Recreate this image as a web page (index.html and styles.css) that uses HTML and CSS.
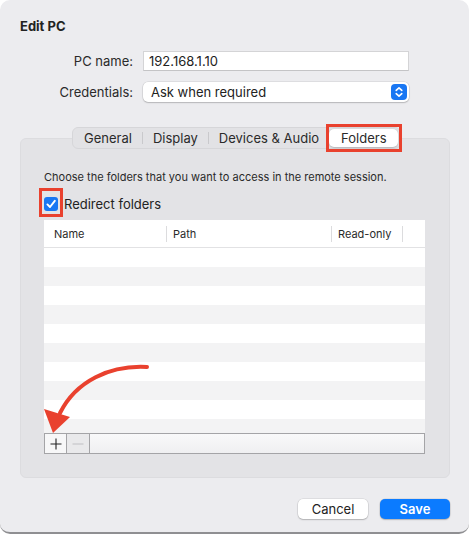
FILE: index.html
```html
<!DOCTYPE html>
<html lang="en">
<head>
    <meta charset="UTF-8">
    <meta name="viewport" content="width=device-width, initial-scale=1.0">
    <title>Edit PC</title>
    <link rel="stylesheet" href="styles.css">
</head>
<body>
    <div class="window">
        <h1 class="title">Edit PC</h1>

        <div class="form">
            <label class="form-label" for="pc-name">PC name:</label>
            <input class="field" type="text" id="pc-name" value="192.168.1.10">

            <label class="form-label">Credentials:</label>
            <div class="popup">
                <span>Ask when required</span>
                <span class="stepper">
                    <svg width="16" height="16" viewBox="0 0 16 16">
                        <path d="M5.2 6.4 L8 3.8 L10.8 6.4 M5.2 9.6 L8 12.2 L10.8 9.6" fill="none" stroke="#fff" stroke-width="1.6" stroke-linecap="round" stroke-linejoin="round"/>
                    </svg>
                </span>
            </div>
        </div>

        <div class="tabs">
            <div class="segmented">
                <span class="tab">General</span>
                <span class="tab-sep"></span>
                <span class="tab">Display</span>
                <span class="tab-sep"></span>
                <span class="tab">Devices &amp; Audio</span>
                <span class="tab selected marked">Folders</span>
            </div>
        </div>

        <div class="tabbox">
            <p class="hint">Choose the folders that you want to access in the remote session.</p>

            <label class="check">
                <span class="checkbox marked">
                    <svg width="14" height="14" viewBox="0 0 14 14">
                        <path d="M3.4 7.4 L6 10 L10.8 3.8" fill="none" stroke="#fff" stroke-width="1.9" stroke-linecap="round" stroke-linejoin="round"/>
                    </svg>
                </span>
                Redirect folders
            </label>

            <div class="table">
                <div class="thead">
                    <div class="th first">Name</div>
                    <div class="th">Path</div>
                    <div class="th">Read-only</div>
                    <div class="th last"></div>
                </div>
                <div class="tbody">
                    <div class="row"></div>
                    <div class="row"></div>
                    <div class="row"></div>
                    <div class="row"></div>
                    <div class="row"></div>
                    <div class="row"></div>
                    <div class="row"></div>
                    <div class="row"></div>
                    <div class="row"></div>
                    <div class="row"></div>
                </div>
                <div class="bar">
                    <span class="bar-btn">
                        <svg width="12" height="12" viewBox="0 0 12 12"><path d="M6 0.5 V11.5 M0.5 6 H11.5" stroke="#222" stroke-width="1.1"/></svg>
                    </span>
                    <span class="bar-btn disabled">
                        <svg width="12" height="12" viewBox="0 0 12 12"><path d="M0.5 6 H11.5" stroke="#c4c4c6" stroke-width="1.1"/></svg>
                    </span>
                    <span class="bar-fill"></span>
                </div>
            </div>
        </div>

        <div class="actions">
            <button class="btn">Cancel</button>
            <button class="btn primary">Save</button>
        </div>

        <!-- callout arrow -->
        <svg class="arrow" width="469" height="534" viewBox="0 0 469 534">
            <path d="M147 367 C 110 365, 76 381, 60 413" fill="none" stroke="#e9412e" stroke-width="4" stroke-linecap="round"/>
            <polygon points="44,409 70,417 53,433" fill="#e9412e"/>
        </svg>
    </div>
</body>
</html>
```

FILE: styles.css
```css
* {
    box-sizing: border-box;
}

html, body {
    margin: 0;
    padding: 0;
    background-color: #ffffff;
}

body {
    font-family: 'Inter', 'Liberation Sans', sans-serif;
    color: #262626;
    font-size: 13px;
}

.window {
    position: relative;
    width: 469px;
    height: 534px;
    padding: 18px 19px 0 20px;
    background-color: #ececef;
    border-radius: 10px;
    border-bottom: 2px solid #8f8f92;
    overflow: hidden;
}

.title {
    margin: 0;
    font-size: 13px;
    line-height: 16px;
    font-weight: 700;
    color: #222;
}

/* form */

.form {
    display: grid;
    grid-template-columns: 113px 266px;
    column-gap: 10px;
    row-gap: 11px;
    align-items: center;
    margin-top: 17px;
}

.form-label {
    text-align: right;
    line-height: 20px;
    color: #2a2a2a;
}

.field {
    height: 20px;
    padding: 0 5px;
    border: 1px solid #d4d4d6;
    border-bottom-color: #c4c4c6;
    background-color: #fff;
    font: inherit;
    color: #222;
    outline: none;
}

.popup {
    display: flex;
    align-items: center;
    justify-content: space-between;
    height: 20px;
    padding: 0 2px 0 8px;
    background-color: #fff;
    border-radius: 5px;
    box-shadow: 0 0 0 0.5px rgba(0, 0, 0, 0.12), 0 1px 1.5px rgba(0, 0, 0, 0.18);
    color: #222;
}

.stepper {
    display: flex;
    width: 16px;
    height: 16px;
    border-radius: 4px;
    background-color: #1977f3;
}

/* tabs */

.tabs {
    position: relative;
    z-index: 1;
    display: flex;
    margin-top: 25px;
    padding-left: 52px;
}

.segmented {
    display: flex;
    align-items: center;
    height: 22px;
    padding: 1px 2px 1px 1px;
    background-color: #e2e2e5;
    border: 1px solid #d6d6d9;
    border-radius: 6px;
}

.tab {
    position: relative;
    padding: 0 10px;
    line-height: 18px;
    color: #2a2a2a;
}

.tab-sep {
    width: 1px;
    height: 12px;
    background-color: #c9c9cc;
}

.tab.selected {
    padding: 0 11px 0 12px;
    background-color: #fff;
    border-radius: 5px;
    box-shadow: 0 0.5px 1.5px rgba(0, 0, 0, 0.2);
}

.marked::after {
    content: '';
    position: absolute;
    top: -5px;
    bottom: -5px;
    left: -3px;
    right: -4px;
    border: 3px solid #e9412e;
}

.tabbox {
    margin-top: -11px;
    padding: 31px 24px 23px 23px;
    background-color: #e3e3e6;
    border: 1px solid #dcdcdf;
    border-radius: 6px;
}

.hint {
    margin: 0;
    font-size: 11px;
    line-height: 14px;
    color: #2a2a2a;
}

.check {
    display: flex;
    align-items: center;
    gap: 6px;
    margin-top: 12px;
    line-height: 16px;
    color: #222;
}

.checkbox {
    position: relative;
    display: flex;
    width: 14px;
    height: 14px;
    border-radius: 3px;
    background-color: #1977f3;
}

.checkbox.marked::after {
    top: -9px;
    bottom: -6px;
    left: -5px;
    right: -5px;
}

/* table */

.table {
    margin-top: 8px;
}

.thead {
    display: grid;
    grid-template-columns: 123px 165px 71px 1fr;
    align-items: center;
    height: 28px;
    background-color: #fff;
    border-bottom: 1px solid #e2e2e4;
}

.th {
    height: 16px;
    padding-left: 6px;
    font-size: 11px;
    line-height: 16px;
    color: #2a2a2a;
    border-right: 1px solid #dcdcde;
}

.th.first {
    padding-left: 10px;
}

.th.last {
    border-right: none;
}

.tbody {
    height: 185px;
    overflow: hidden;
    background-color: #fff;
}

.row {
    height: 19px;
}

.row:nth-child(even) {
    background-color: #f3f3f4;
}

.bar {
    display: flex;
    height: 21px;
    border: 1px solid #a4a4a7;
    background-color: #f5f5f6;
}

.bar-btn {
    display: flex;
    align-items: center;
    justify-content: center;
    width: 22px;
    border-right: 1px solid #a4a4a7;
    background-color: #f7f7f8;
}

.bar-btn.disabled {
    width: 23px;
    background-color: #e9e9eb;
}

.bar-fill {
    flex: 1;
    background: linear-gradient(#f9f9fa, #efeff1);
}

/* buttons */

.actions {
    display: flex;
    justify-content: flex-end;
    gap: 12px;
    margin-top: 21px;
}

.btn {
    width: 70px;
    height: 20px;
    padding: 0;
    border: none;
    border-radius: 5px;
    background-color: #fff;
    box-shadow: 0 0 0 0.5px rgba(0, 0, 0, 0.12), 0 1px 1.5px rgba(0, 0, 0, 0.2);
    font-family: inherit;
    font-size: 13px;
    color: #222;
}

.btn.primary {
    background-color: #0b7bff;
    color: #fff;
    font-weight: 600;
}

.arrow {
    position: absolute;
    top: 0;
    left: 0;
    pointer-events: none;
}
```
